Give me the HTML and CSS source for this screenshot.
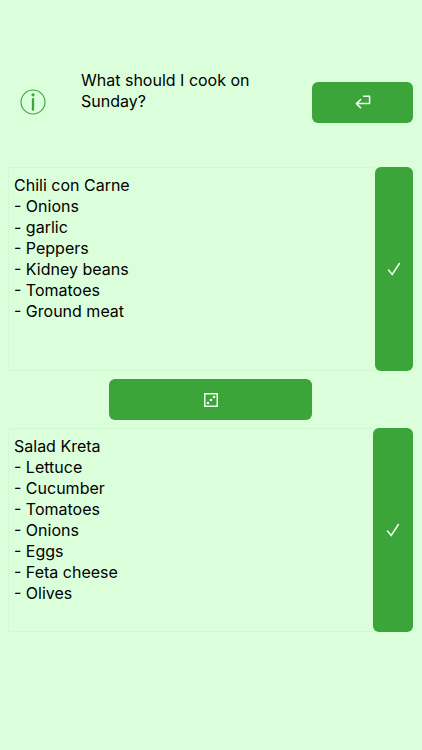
FILE: index.html
```html
<!DOCTYPE html>
<html lang="en">
<head>
<meta charset="utf-8">
<meta name="viewport" content="width=device-width, initial-scale=1">
<title>What should I cook on Sunday?</title>
<link rel="stylesheet" href="styles.css">
</head>
<body>
<main class="screen">
  <header class="top">
    <button class="info" type="button" aria-label="Info">
      <svg width="26" height="26" viewBox="0 0 26 26" fill="none" stroke="currentColor">
        <circle cx="13" cy="13" r="12" stroke-width="1.1"/>
        <circle cx="13" cy="5.8" r="1.6" fill="currentColor" stroke="none"/>
        <path d="M13 9.2V21.6" stroke-width="2.3"/>
      </svg>
    </button>
    <textarea class="text question" aria-label="Question" spellcheck="false">What should I cook on Sunday?</textarea>
    <button class="btn enter" type="button" aria-label="Enter">
      <svg width="16" height="14" viewBox="0 0 16 14" fill="none" stroke="currentColor" stroke-width="1.5" stroke-linecap="round" stroke-linejoin="round">
        <path d="M8.6 1.2H14.6V8.6H1.4M5.6 4.6L1.4 8.6L5.6 12.8"/>
      </svg>
    </button>
  </header>

  <section class="option">
    <textarea class="text list" aria-label="First option" spellcheck="false">Chili con Carne
- Onions
- garlic
- Peppers
- Kidney beans
- Tomatoes
- Ground meat</textarea>
    <button class="btn pick" type="button" aria-label="Choose first option">
      <svg width="14" height="14" viewBox="0 0 14 14" fill="none" stroke="currentColor" stroke-width="1.5" stroke-linecap="round">
        <path d="M1.5 8L5.2 12.4L12.4 1.5"/>
      </svg>
    </button>
  </section>

  <button class="btn roll" type="button" aria-label="Roll the dice">
    <svg width="14" height="14" viewBox="0 0 14 14" fill="none" stroke="currentColor">
      <rect x=".75" y=".75" width="12.5" height="12.5" stroke-width="1.5"/>
      <g fill="currentColor" stroke="none">
        <circle cx="4" cy="10" r="1.3"/>
        <circle cx="7" cy="7" r="1.3"/>
        <circle cx="10" cy="4" r="1.3"/>
      </g>
    </svg>
  </button>

  <section class="option">
    <textarea class="text list" aria-label="Second option" spellcheck="false">Salad Kreta
- Lettuce
- Cucumber
- Tomatoes
- Onions
- Eggs
- Feta cheese
- Olives</textarea>
    <button class="btn pick wide" type="button" aria-label="Choose second option">
      <svg width="14" height="14" viewBox="0 0 14 14" fill="none" stroke="currentColor" stroke-width="1.5" stroke-linecap="round">
        <path d="M1.5 8L5.2 12.4L12.4 1.5"/>
      </svg>
    </button>
  </section>
</main>
</body>
</html>
```
FILE: styles.css
```css
* {
  box-sizing: border-box;
}

body {
  margin: 0;
  min-height: 100vh;
  background: #dbffdb;
  color: #000;
  font-family: Inter, "Liberation Sans", sans-serif;
}

.screen {
  display: flex;
  flex-direction: column;
  gap: 8px;
  padding: 70px 9px 24px 8px;
}

.top {
  display: flex;
  align-items: center;
  height: 64px;
  margin-bottom: 25px;
}

.text {
  display: block;
  flex: 1;
  min-width: 0;
  margin: 0;
  border: 0;
  background: transparent;
  color: inherit;
  font: 16px/21px Inter, "Liberation Sans", sans-serif;
  resize: none;
  outline: none;
  overflow: hidden;
}

.question {
  height: 64px;
  padding: 0 40px 0 0;
}

.info {
  display: flex;
  width: 73px;
  padding: 0 0 0 12px;
  border: 0;
  background: none;
  color: #3aa63a;
}

.btn {
  display: flex;
  flex: none;
  align-items: center;
  justify-content: center;
  padding: 0;
  border: 0;
  border-radius: 6px;
  background: #3ba53a;
  color: #f2fff2;
}

.enter {
  width: 101px;
  height: 41px;
}

.option {
  display: flex;
  height: 204px;
}

.list {
  padding: 7px 5px;
  border: 1px solid #d3f8d5;
  border-right: 0;
}

.pick {
  width: 38px;
}

.pick.wide {
  width: 40px;
}

.roll {
  align-self: center;
  width: 50%;
  height: 41px;
}
```
